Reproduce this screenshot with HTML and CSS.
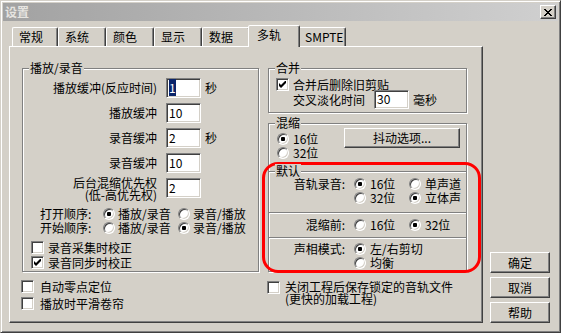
FILE: index.html
```html
<!DOCTYPE html>
<html>
<head>
  <meta charset="utf-8">
  <title>设置</title>
  <link rel="stylesheet" href="styles.css">
</head>
<body>
  <div class="window">
    <div class="titlebar">
      <span class="title">设置</span>
      <span class="close-btn">
        <svg width="8" height="7" viewBox="0 0 8 7" shape-rendering="crispEdges"><path d="M0 0h2v1H0zM6 0h2v1H6zM1 1h2v1H1zM5 1h2v1H5zM2 2h4v1H2zM3 3h2v1H3zM2 4h4v1H2zM1 5h2v1H1zM5 5h2v1H5zM0 6h2v1H0zM6 6h2v1H6z"/></svg>
      </span>
    </div>

    <div class="client">
      <div class="tabctl">
        <div class="tabs">
          <div class="tab tab-first">常规</div>
          <div class="tab">系统</div>
          <div class="tab">颜色</div>
          <div class="tab">显示</div>
          <div class="tab">数据</div>
          <div class="tab active">多轨</div>
          <div class="tab">SMPTE</div>
        </div>

        <div class="panel">
          <div class="col-left">
            <div class="group group-play">
              <div class="group-title">播放/录音</div>

              <div class="field field-first">
                <span class="field-label">播放缓冲(反应时间)</span>
                <span class="edit"><span class="sel">1</span></span>
                <span class="unit">秒</span>
              </div>
              <div class="field">
                <span class="field-label">播放缓冲</span>
                <span class="edit">10</span>
              </div>
              <div class="field">
                <span class="field-label">录音缓冲</span>
                <span class="edit">2</span>
                <span class="unit">秒</span>
              </div>
              <div class="field">
                <span class="field-label">录音缓冲</span>
                <span class="edit">10</span>
              </div>
              <div class="field field-tall">
                <span class="field-label">后台混缩优先权<br>(低-高优先权)</span>
                <span class="edit">2</span>
              </div>

              <div class="order order-first">
                <span>打开顺序:</span>
                <span class="opt"><span class="radio checked"></span>播放/录音</span>
                <span class="opt"><span class="radio"></span>录音/播放</span>
              </div>
              <div class="order">
                <span>开始顺序:</span>
                <span class="opt"><span class="radio"></span>播放/录音</span>
                <span class="opt"><span class="radio checked"></span>录音/播放</span>
              </div>

              <div class="check check-play check-first">
                <span class="box"></span>录音采集时校正
              </div>
              <div class="check check-play">
                <span class="box checked"><svg width="7" height="7" viewBox="0 0 7 7"><path d="M0 2L2 4L7 -1V2L2 7L0 5Z"/></svg></span>录音同步时校正
              </div>
            </div>

            <div class="check check-below check-first">
              <span class="box"></span>自动零点定位
            </div>
            <div class="check check-below">
              <span class="box"></span>播放时平滑卷帘
            </div>
          </div>

          <div class="col-right">
            <div class="group group-merge">
              <div class="group-title">合并</div>
              <div class="check check-merge">
                <span class="box checked"><svg width="7" height="7" viewBox="0 0 7 7"><path d="M0 2L2 4L7 -1V2L2 7L0 5Z"/></svg></span>合并后删除旧剪贴
              </div>
              <div class="fade-row">
                <span>交叉淡化时间</span>
                <span class="edit">30</span>
                <span class="unit">毫秒</span>
              </div>
            </div>

            <div class="group group-mix">
              <div class="group-title">混缩</div>
              <div class="mix-top">
                <div class="mix-radios">
                  <span class="opt"><span class="radio checked"></span>16位</span>
                  <span class="opt"><span class="radio"></span>32位</span>
                </div>
                <div class="btn btn-dither">抖动选项...</div>
              </div>

              <div class="mark">
                <div class="section">
                  <div class="group-title">默认</div>

                  <div class="opt-grid grid-first">
                    <span class="opt-label">音轨录音:</span>
                    <span class="opt"><span class="radio checked"></span>16位</span>
                    <span class="opt"><span class="radio"></span>单声道</span>
                    <span></span>
                    <span class="opt"><span class="radio"></span>32位</span>
                    <span class="opt"><span class="radio checked"></span>立体声</span>
                  </div>
                  <div class="sep sep-first"></div>
                  <div class="opt-grid grid-mixpre">
                    <span class="opt-label">混缩前:</span>
                    <span class="opt"><span class="radio"></span>16位</span>
                    <span class="opt"><span class="radio checked"></span>32位</span>
                  </div>
                  <div class="sep sep-second"></div>
                  <div class="opt-grid grid-pan">
                    <span class="opt-label">声相模式:</span>
                    <span class="opt"><span class="radio checked"></span>左/右剪切</span>
                    <span></span>
                    <span></span>
                    <span class="opt"><span class="radio"></span>均衡</span>
                  </div>
                </div>
              </div>
            </div>

            <div class="check check-close">
              <span class="box"></span>
              <span>关闭工程后保存锁定的音轨文件<br>(更快的加载工程)</span>
            </div>
          </div>
        </div>
      </div>

      <div class="buttons">
        <div class="btn btn-side">确定</div>
        <div class="btn btn-side">取消</div>
        <div class="btn btn-side">帮助</div>
      </div>
    </div>
  </div>
</body>
</html>
```

FILE: styles.css
```css
* {
    box-sizing: border-box;
}

body {
    margin: 0;
    font-family: "Noto Sans CJK SC", "Liberation Sans", sans-serif;
    font-size: 12px;
    line-height: 14px;
    color: #000;
    background: #d4d0c8;
}

/* window frame */
.window {
    width: 561px;
    height: 333px;
    display: flex;
    flex-direction: column;
    padding: 2px;
    background: #d4d0c8;
    border: 1px solid;
    border-color: #d4d0c8 #404040 #404040 #d4d0c8;
    box-shadow: inset 1px 1px #fff, inset -1px -1px #808080;
}

.titlebar {
    height: 18px;
    display: flex;
    align-items: center;
    justify-content: space-between;
    padding: 0 2px 0 2px;
    background: linear-gradient(to right, #a2a2a2, #d0d0d0);
}

.title {
    color: #e6e4e0;
    font-weight: bold;
}

.close-btn {
    width: 16px;
    height: 14px;
    display: flex;
    align-items: center;
    justify-content: center;
    background: #d4d0c8;
    border: 1px solid;
    border-color: #fff #404040 #404040 #fff;
    box-shadow: inset -1px -1px #808080;
}

.client {
    flex: 1;
    display: flex;
    padding: 4px 0 7px 6px;
}

/* tab control */
.tabs {
    display: flex;
    height: 21px;
    padding-left: 3px;
}

.tab {
    width: 48px;
    height: 19px;
    margin-top: 2px;
    padding: 2px 0 0 6px;
    border: 1px solid;
    border-bottom: 0;
    border-color: #fff #404040 transparent #fff;
    border-radius: 2px 2px 0 0;
    box-shadow: inset -1px 0 #808080;
}

.tab-first {
    width: 46px;
}

.tab.active {
    position: relative;
    z-index: 1;
    width: 52px;
    height: 22px;
    margin: 0 -2px -1px;
    padding-left: 8px;
    background: #d4d0c8;
}

.panel {
    width: 474px;
    height: 277px;
    display: flex;
    gap: 9px;
    padding: 21px 0 0 12px;
    border: 1px solid;
    border-color: #fff #404040 #404040 #fff;
    box-shadow: inset -1px -1px #808080;
}

.col-left {
    width: 237px;
}

.col-right {
    width: 199px;
}

/* group boxes */
.group {
    border: 1px solid #808080;
    box-shadow: inset 1px 1px #fff, 1px 1px #fff;
}

.group-title {
    display: table;
    height: 14px;
    margin: -8px 0 0 6px;
    padding: 0 1px;
    background: #d4d0c8;
}

.group-play {
    padding-bottom: 1px;
}

.field {
    display: flex;
    align-items: center;
    height: 20px;
    margin-top: 5px;
}

.field-first {
    margin-top: 3px;
}

.field-tall {
    height: 24px;
    margin-top: 4px;
    align-items: flex-start;
    line-height: 12px;
}

.field-tall .edit {
    margin-top: 1px;
}

.field-label {
    width: 134px;
    text-align: right;
    white-space: nowrap;
}

.edit {
    width: 35px;
    height: 20px;
    margin-left: 9px;
    padding: 2px 0 0 2px;
    background: #fff;
    border: 1px solid;
    border-color: #808080 #fff #fff #808080;
    box-shadow: inset 1px 1px #404040, inset -1px -1px #d4d0c8;
    line-height: 14px;
}

.sel {
    background: #0a246a;
    color: #fff;
}

.unit {
    margin-left: 4px;
}

.order {
    display: grid;
    grid-template-columns: 63px 75px auto;
    height: 14px;
    padding-left: 17px;
}

.order-first {
    margin-top: 6px;
}

.opt {
    display: flex;
    align-items: center;
    gap: 3px;
    white-space: nowrap;
}

.radio {
    width: 12px;
    height: 12px;
    flex: none;
    border-radius: 50%;
    background: #fff;
    border: 1px solid;
    border-color: #808080 #fff #fff #808080;
    box-shadow: inset 1px 1px #404040, inset -1px -1px #d4d0c8;
}

.radio.checked {
    background: radial-gradient(circle, #000 2px, #fff 2.5px);
}

/* check boxes */
.check {
    display: flex;
    align-items: center;
    white-space: nowrap;
}

.box {
    width: 13px;
    height: 13px;
    flex: none;
    display: flex;
    align-items: center;
    justify-content: center;
    background: #fff;
    border: 1px solid;
    border-color: #808080 #fff #fff #808080;
    box-shadow: inset 1px 1px #404040, inset -1px -1px #d4d0c8;
}

.check-play {
    height: 15px;
    gap: 4px;
    padding-left: 8px;
}

.check-play.check-first {
    margin-top: 5px;
}

.check-below {
    height: 17px;
    gap: 6px;
    margin-left: -1px;
}

.check-below.check-first {
    margin-top: 6px;
}

.group-merge {
    padding-bottom: 3px;
}

.check-merge {
    height: 13px;
    gap: 4px;
    margin-top: 3px;
    padding-left: 7px;
}

.fade-row {
    display: flex;
    align-items: center;
    height: 19px;
    margin-top: -1px;
    padding-left: 24px;
}

.fade-row .edit {
    height: 19px;
    padding-top: 1px;
}

.group-mix {
    margin-top: 10px;
}

.mix-top {
    display: flex;
    margin-top: 2px;
}

.mix-radios {
    display: flex;
    flex-direction: column;
    padding-left: 8px;
}

.mix-radios .opt {
    height: 14px;
    gap: 4px;
}

.btn {
    display: flex;
    align-items: center;
    justify-content: center;
    background: #d4d0c8;
    border: 1px solid;
    border-color: #fff #404040 #404040 #fff;
    box-shadow: inset -1px -1px #808080;
}

.btn-dither {
    width: 116px;
    height: 20px;
    margin: -4px 6px 0 auto;
}

/* red annotation round the defaults */
.mark {
    margin: 2px -15px -2px -7px;
    padding: 6px 12px 0 4px;
    border: 3px solid #f00;
    border-radius: 16px;
}

.section {
    border-top: 1px solid #808080;
    box-shadow: inset 0 1px #fff;
}

.opt-grid {
    display: grid;
    grid-template-columns: 85px 55px auto;
    grid-auto-rows: 14px;
}

.opt-grid .opt {
    gap: 4px;
}

.opt-label {
    padding-right: 9px;
    text-align: right;
}

.grid-first {
    margin-top: -1px;
}

.sep {
    height: 2px;
    border-top: 1px solid #808080;
    border-bottom: 1px solid #fff;
}

.sep-first {
    margin-top: 7px;
}

.grid-mixpre {
    margin-top: 4px;
}

.sep-second {
    margin-top: 5px;
}

.grid-pan {
    margin-top: 3px;
}

.check-close {
    align-items: flex-start;
    gap: 5px;
    margin: 9px 0 0 -1px;
    line-height: 12px;
}

/* dialog buttons */
.buttons {
    display: flex;
    flex-direction: column;
    justify-content: flex-end;
    gap: 4px;
    margin-left: 7px;
}

.btn-side {
    width: 60px;
    height: 21px;
}
```
